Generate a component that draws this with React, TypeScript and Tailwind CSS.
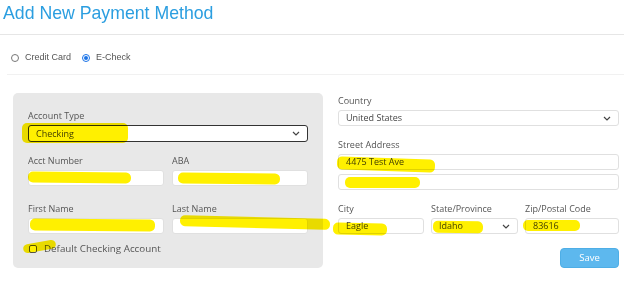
import React from "react";

const label = "block text-[9px] leading-[12px] text-[#555]";
const input =
  "flex items-center bg-white border border-[#e0e0e0] rounded-[3px] px-[7px] text-[9px] text-[#444]";

function Chevron() {
  return (
    <svg width="8" height="5" viewBox="0 0 8 5" className="ml-auto">
      <path d="M1 1l3 3 3-3" fill="none" stroke="#444" strokeWidth="1.2" />
    </svg>
  );
}

function Field({ name, value, select, className = "" }: { name: string; value?: string; select?: boolean; className?: string }) {
  return (
    <div className={className}>
      <span className={label}>{name}</span>
      <div className={`${input} h-[16px] mt-[3px]`}>
        <span>{value}</span>
        {select && <Chevron />}
      </div>
    </div>
  );
}

// highlighter strokes painted over the screenshot
const marks = [
  { l: 22, t: 123, w: 106, h: 20, r: 0 },
  { l: 28, t: 172, w: 103, h: 11, r: 0.5 },
  { l: 178, t: 173, w: 102, h: 11, r: 0.5 },
  { l: 30, t: 219, w: 125, h: 12, r: 0.5 },
  { l: 180, t: 217, w: 150, h: 11, r: 1.5 },
  { l: 23, t: 242, w: 33, h: 9, r: -10 },
  { l: 337, t: 158, w: 98, h: 13, r: 2 },
  { l: 345, t: 177, w: 75, h: 11, r: 0 },
  { l: 333, t: 223, w: 54, h: 12, r: 1 },
  { l: 433, t: 221, w: 50, h: 12, r: 1 },
  { l: 523, t: 220, w: 57, h: 11, r: 0 },
];

export default function App() {
  return (
    <div className="relative w-[624px] h-[288px] overflow-hidden bg-white" style={{ fontFamily: '"Open Sans", "Noto Sans", sans-serif' }}>
      <h1
        className="h-[35px] pl-[3px] pt-[2px] text-[17.7px] leading-[22px] text-[#2b9ee0] border-b border-[#e6e6e6]"
        style={{ fontFamily: '"Liberation Sans", Arial, sans-serif' }}
      >
        Add New Payment Method
      </h1>

      <div
        className="ml-[7px] h-[40px] pt-[6px] flex items-center border-b border-[#f1f1f1] text-[9px] text-[#555]"
        style={{ fontFamily: '"Liberation Sans", Arial, sans-serif' }}
      >
        <span className="ml-[4px] w-[8px] h-[8px] rounded-full border border-[#777] bg-white" />
        <span className="ml-[6px]">Credit Card</span>
        <span className="ml-[11px] w-[8px] h-[8px] rounded-full border border-[#1a73e8] flex items-center justify-center">
          <span className="w-[4px] h-[4px] rounded-full bg-[#1a73e8]" />
        </span>
        <span className="ml-[6px]">E-Check</span>
      </div>

      <div className="flex mt-[18px]">
        <div className="ml-[13px] w-[310px] h-[175px] bg-[#e8e8e8] rounded-[5px] px-[15px] pt-[17px]">
          <span className={label}>Account Type</span>
          <div className="mt-[3px] h-[17px] flex items-center bg-white border border-[#333] rounded-[3px] px-[7px] text-[9px] text-[#444]">
            <span>Checking</span>
            <Chevron />
          </div>
          <div className="grid grid-cols-2 gap-x-[8px] mt-[13px]">
            <Field name="Acct Number" />
            <Field name="ABA" />
          </div>
          <div className="grid grid-cols-2 gap-x-[8px] mt-[17px]">
            <Field name="First Name" />
            <Field name="Last Name" />
          </div>
          <label className="flex items-center mt-[8px] text-[9.8px] text-[#555]">
            <span className="ml-[1px] w-[8px] h-[8px] border border-[#555] rounded-[2px] bg-white" />
            <span className="ml-[7px]">Default Checking Account</span>
          </label>
        </div>

        <div className="ml-[15px] w-[281px] pt-[2px]">
          <Field name="Country" value="United States" select />
          <div className="mt-[13px]">
            <span className={label}>Street Address</span>
            <div className={`${input} h-[16px] mt-[3px]`}>4475 Test Ave</div>
            <div className={`${input} h-[16px] mt-[4px]`} />
          </div>
          <div className="grid grid-cols-[86px_87px_94px] gap-x-[7px] mt-[13px]">
            <Field name="City" value="Eagle" />
            <Field name="State/Province" value="Idaho" select />
            <Field name="Zip/Postal Code" value="83616" />
          </div>
          <div className="flex justify-end mt-[14px]">
            <button className="w-[59px] h-[20px] rounded-[4px] bg-[#5db8ee] border border-[#4eaee6] text-white text-[9.5px]">
              Save
            </button>
          </div>
        </div>
      </div>

      <div className="absolute inset-0 pointer-events-none">
        {marks.map((m, i) => (
          <span
            key={i}
            className="absolute rounded-[5px] bg-[#fff000] mix-blend-multiply"
            style={{ left: m.l, top: m.t, width: m.w, height: m.h, transform: `rotate(${m.r}deg)` }}
          />
        ))}
      </div>
    </div>
  );
}
